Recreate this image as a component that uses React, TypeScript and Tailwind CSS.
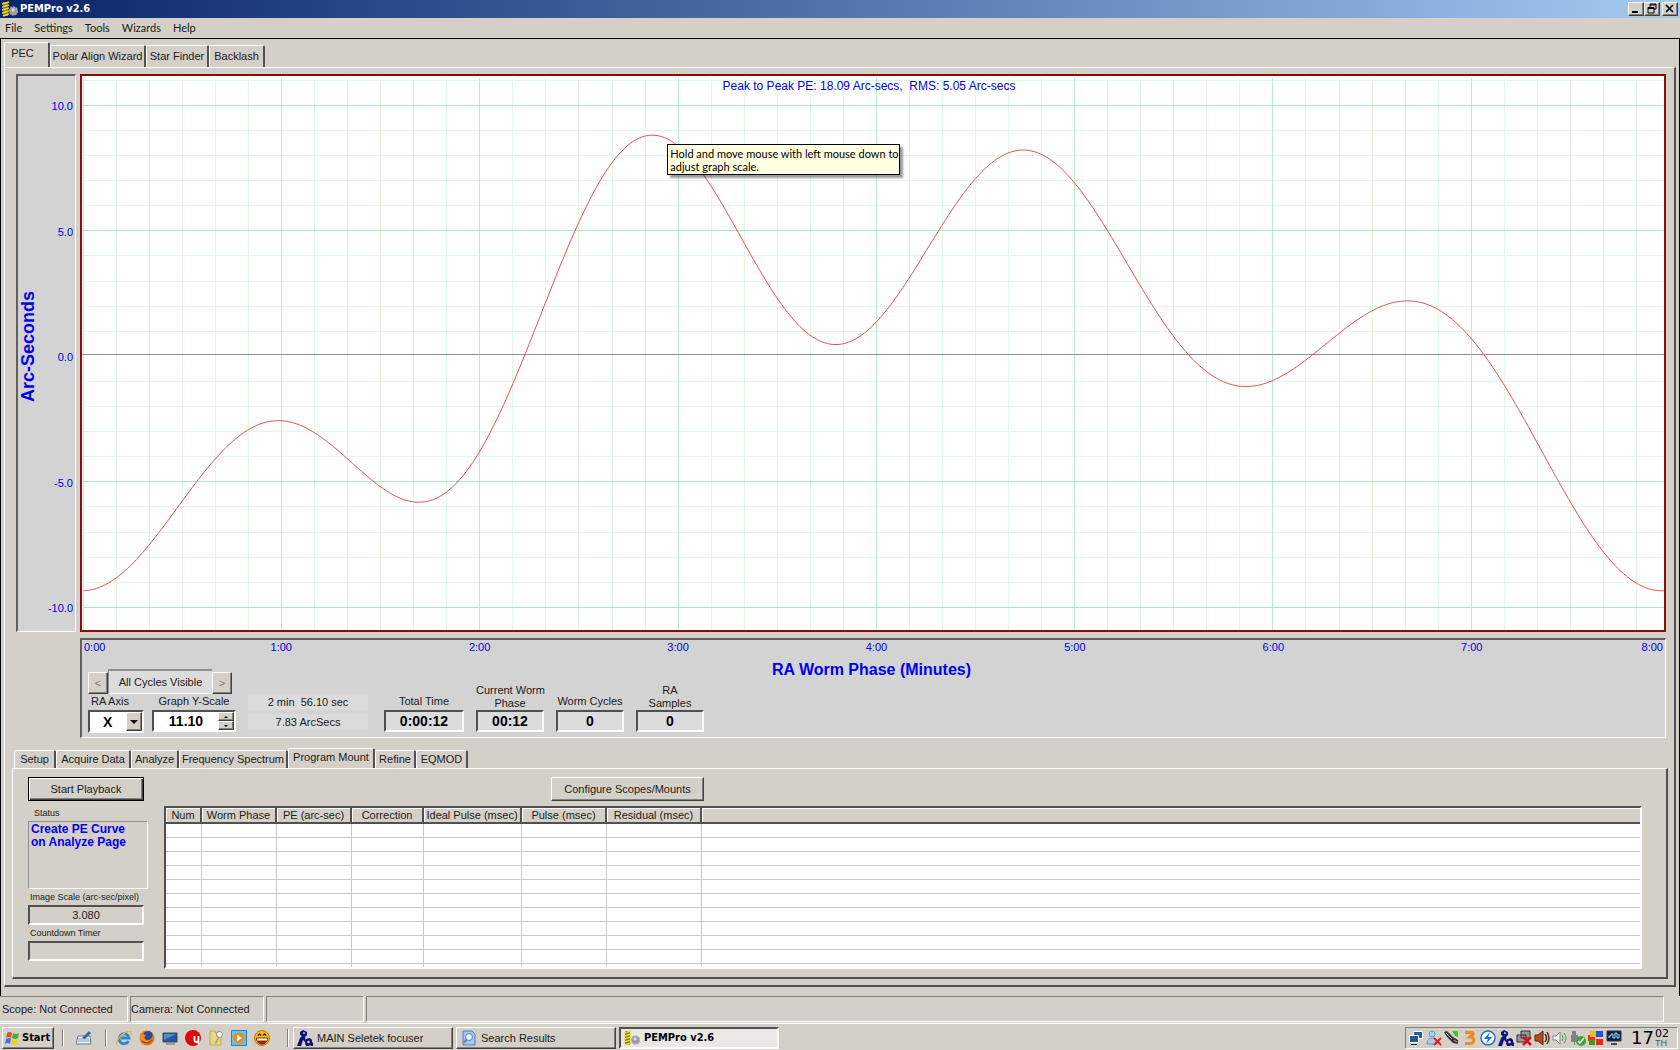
import { useState } from 'react';
import type { ReactNode } from 'react';

const sunken = 'border-2 border-t-[#505050] border-l-[#505050] border-r-white border-b-white';
const raised = 'border border-t-white border-l-white border-r-[#404040] border-b-[#404040] shadow-[inset_-1px_-1px_0_#808080]';

const mainTabs = [
  { label: 'PEC', width: 'w-[46px]' },
  { label: 'Polar Align Wizard', width: 'w-[96px]' },
  { label: 'Star Finder', width: 'w-[63px]' },
  { label: 'Backlash', width: 'w-[56px]' },
];

const pecTabs = [
  { label: 'Setup', width: 'w-[42px]' },
  { label: 'Acquire Data', width: 'w-[75px]' },
  { label: 'Analyze', width: 'w-[48px]' },
  { label: 'Frequency Spectrum', width: 'w-[109px]' },
  { label: 'Program Mount', width: 'w-[87px]' },
  { label: 'Refine', width: 'w-[41px]' },
  { label: 'EQMOD', width: 'w-[52px]' },
];

const columns = [
  { label: 'Num', width: 'w-[35px]' },
  { label: 'Worm Phase', width: 'w-[75px]' },
  { label: 'PE (arc-sec)', width: 'w-[75px]' },
  { label: 'Correction', width: 'w-[72px]' },
  { label: 'Ideal Pulse (msec)', width: 'w-[98px]' },
  { label: 'Pulse (msec)', width: 'w-[85px]' },
  { label: 'Residual (msec)', width: 'w-[95px]' },
];

const samples: [number, number][] = [
  [84.1, 590.3], [116.7, 577.7], [138.7, 557.7], [159, 532.7], [182, 500.7], [195.8, 482.3], [216.7, 457],
  [248.4, 430], [279, 421], [314.7, 432], [344.8, 457], [374.9, 482.3], [396.3, 497], [419.3, 501.7],
  [446.3, 492.7], [457.6, 482.3], [480.5, 450], [502.4, 406.3], [525.4, 354.7], [543.8, 306.3], [556, 276.7],
  [575.4, 230.3], [595.3, 188.3], [613.7, 160], [631, 142.7], [652.4, 136.5], [676, 144], [703.5, 175],
  [737.7, 230.3], [765.7, 281.3], [784, 309], [807, 332.3], [836, 344.3], [864.7, 333.3], [877, 322],
  [906.2, 281.3], [939.4, 230.3], [974.6, 180], [997.5, 157.3], [1023, 150], [1049.6, 159], [1075, 184],
  [1107.2, 230.3], [1137.9, 281.3], [1170, 331.7], [1188.4, 354.7], [1217, 378.7], [1245.5, 386.3],
  [1276.6, 379.3], [1312.3, 354.7], [1340.4, 331.7], [1375, 310], [1406.7, 301], [1441.4, 311],
  [1463.4, 329], [1483.3, 354.7], [1506.7, 390], [1531.7, 431.3], [1558.8, 482.3], [1582.8, 523.3],
  [1603.2, 551.7], [1630.2, 578.7], [1648, 588.3], [1663.9, 590.7],
];

const x0 = samples[0][0];
const period = samples[samples.length - 1][0] - x0;

function slope(i: number) {
  if (i === 0 || i === samples.length - 1) return 0;
  const [xa, ya] = samples[i - 1];
  const [xb, yb] = samples[i];
  const [xc, yc] = samples[i + 1];
  return (((yb - ya) / (xb - xa)) * (xc - xb) + ((yc - yb) / (xc - xb)) * (xb - xa)) / (xc - xa);
}

function interpolate(x: number) {
  let i = 1;
  while (i < samples.length - 1 && samples[i][0] < x) i++;
  const [xa, ya] = samples[i - 1];
  const [xb, yb] = samples[i];
  const h = xb - xa;
  const t = (x - xa) / h;
  return (
    ya * (1 + 2 * t) * (1 - t) ** 2 +
    slope(i - 1) * h * t * (1 - t) ** 2 +
    yb * t * t * (3 - 2 * t) +
    slope(i) * h * t * t * (t - 1)
  );
}

// the error of one worm turn is periodic, so only its first harmonics are drawn
function pePath(harmonics = 9, n = 512) {
  const ys = Array.from({ length: n }, (_, i) => interpolate(x0 + (i * period) / n));
  const terms = Array.from({ length: harmonics + 1 }, (_, k) => {
    let a = 0;
    let b = 0;
    ys.forEach((y, i) => {
      a += y * Math.cos((2 * Math.PI * k * i) / n);
      b += y * Math.sin((2 * Math.PI * k * i) / n);
    });
    return k === 0 ? [a / n, 0] : [(2 * a) / n, (2 * b) / n];
  });
  const pts = [];
  for (let i = 0; i <= n; i++) {
    const w = (2 * Math.PI * i) / n;
    const y = terms.reduce((sum, [a, b], k) => sum + a * Math.cos(k * w) + b * Math.sin(k * w), 0);
    pts.push(`${(x0 + (i * period) / n).toFixed(2)} ${y.toFixed(2)}`);
  }
  return 'M' + pts.join('L');
}

const curvePath = pePath();

function PeGraph() {
  const cols = Array.from({ length: 48 }, (_, i) => ({ x: Math.floor(83.3 + i * 33.045) + 0.5, major: i % 6 === 0 }));
  const rows = Array.from({ length: 22 }, (_, i) => ({ y: Math.floor(80.2 + i * 25.1) + 0.5, v: 11 - i }));
  return (
    <svg viewBox="82 76 1582 554" preserveAspectRatio="none" className="block w-full flex-1 min-h-0 h-0">
      <g shapeRendering="crispEdges" strokeWidth="1">
        {rows.map(r => r.v % 5 !== 0 && <line key={r.v} x1="83" x2="1664" y1={r.y} y2={r.y} stroke="#e0f9e6" />)}
        {cols.map(c => !c.major && <line key={c.x} y1="79" y2="630" x1={c.x} x2={c.x} stroke="#e0f9e6" />)}
        {cols.map(c => c.major && <line key={c.x} y1="78" y2="630" x1={c.x} x2={c.x} stroke="#bcecce" />)}
        {rows.map(r => r.v % 5 === 0 && r.v !== 0 && <line key={r.v} x1="83" x2="1664" y1={r.y} y2={r.y} stroke="#a8e6c6" />)}
        <line x1="82" x2="1664" y1="354.5" y2="354.5" stroke="#909090" />
      </g>
      <path d={curvePath} fill="none" stroke="#e85050" strokeWidth="1" />
    </svg>
  );
}

function AppIcon() {
  return (
    <svg viewBox="0 0 16 16" className="w-4 h-4 shrink-0">
      <path d="M1 1h5v14H1z" fill="#8a7a10" />
      <path d="M0 3l7-2M0 6l7-2M0 9l7-2M0 12l7-2M1 15l6-2" stroke="#f0dc30" strokeWidth="1.5" />
      <circle cx="11.500" cy="10" r="4" fill="#9a9aa2" />
      <circle cx="11.500" cy="10" r="4" fill="none" stroke="#a8a8b0" strokeWidth="1.500" strokeDasharray="2 1" />
      <circle cx="11" cy="9" r="1.500" fill="#e4e4ea" />
    </svg>
  );
}

function FocuserIcon() {
  return (
    <svg viewBox="0 0 16 16" className="w-4 h-4 shrink-0">
      <path d="M3 2l3-2 4 2v3l-2 2 1 5h-1l-2-2-2 6H0l3-8 2-2-2-1z" fill="#10107c" />
      <path d="M9 9l4-1 2 2v2l1 1v3h-2l-1-1-1 1H9l-1-3z" fill="#10107c" />
      <circle cx="7" cy="3" r="1" fill="#b8c0ff" />
      <circle cx="11.500" cy="12" r="1.300" fill="#d4d0c8" />
    </svg>
  );
}

function SearchIcon() {
  return (
    <svg viewBox="0 0 16 16" className="w-4 h-4 shrink-0">
      <path d="M2 1h9l3 3v11H2z" fill="#a8c4f0" stroke="#5a78b8" />
      <circle cx="8" cy="7" r="3.500" fill="#e8f4ff" stroke="#5880c0" />
      <path d="M5.500 9.500L3 12.500" stroke="#5880c0" strokeWidth="2" />
    </svg>
  );
}

type TabListProps = {
  tabs: { label: string; width: string }[];
  active: string;
  onChange: (label: string) => void;
  name: string;
  selectedClass: string;
  tabClass: string;
};

function TabList({ tabs, active, onChange, name, selectedClass, tabClass }: TabListProps) {
  return (
    <div role="tablist" aria-label={name} className="flex items-end">
      {tabs.map(t => (
        <button
          key={t.label}
          role="tab"
          aria-selected={t.label === active}
          onClick={() => onChange(t.label)}
          className={`${t.width} shrink-0 whitespace-nowrap rounded-t-xs border-t border-l border-r-2 border-t-white border-l-white border-r-[#505050] bg-[#d4d0c8] text-center ${
            t.label === active ? selectedClass : tabClass
          }`}
        >
          {t.label}
        </button>
      ))}
    </div>
  );
}

function Readout({ label, value, width }: { label: ReactNode; value: string; width: string }) {
  return (
    <div className={`${width} flex flex-col justify-end text-center`}>
      <div className="leading-[13px]">{label}</div>
      <output className={`${sunken} block h-[22px] bg-[#dcdcdc] font-bold text-sm leading-[18px] text-black`}>{value}</output>
    </div>
  );
}

function QuickLaunch() {
  return (
    <div className="flex items-center gap-[7px]">
      <button aria-label="Internet Explorer">
        <svg viewBox="0 0 16 16" className="w-4 h-4">
          <path d="M12.500 11a5 5 0 1 1 .5-3H5" fill="none" stroke="#2a86d8" strokeWidth="2.800" />
          <path d="M1 14.500C-1 10 9 0 15 1.500q1 1-.5 3" fill="none" stroke="#e8b830" strokeWidth="1.300" />
        </svg>
      </button>
      <button aria-label="Firefox">
        <svg viewBox="0 0 16 16" className="w-4 h-4">
          <circle cx="8" cy="8" r="7.500" fill="#e07818" />
          <circle cx="9" cy="5.500" r="4.500" fill="#304a98" />
          <path d="M1 3c2 1 3 2 6 2l-2 3c2 4 6 3 8 0 0 5-4 6-7 5S0 8 1 3z" fill="#f0921c" />
          <path d="M3 11q5 4 10-1" fill="none" stroke="#b83c10" strokeWidth="1.200" />
        </svg>
      </button>
      <button aria-label="Show Desktop">
        <svg viewBox="0 0 16 16" className="w-4 h-4">
          <path d="M1 3h14v9H1z" fill="#2454a4" stroke="#484848" />
          <path d="M2 4h12L2 10z" fill="#4c8cd8" />
          <path d="M4 14h9" stroke="#606060" />
        </svg>
      </button>
      <button aria-label="Mu">
        <svg viewBox="0 0 16 16" className="w-4 h-4">
          <circle cx="8" cy="8" r="8" fill="#e00808" />
          <path d="M9.500 6v4q0 2 2 2t2-2V6M13.500 10v4" fill="none" stroke="#fff" strokeWidth="1.800" />
        </svg>
      </button>
      <button aria-label="Keys">
        <svg viewBox="0 0 16 16" className="w-4 h-4">
          <path d="M2 1h5l1 2h5v12H2z" fill="#e8d878" stroke="#c0a850" />
          <circle cx="11.500" cy="4.500" r="3" fill="#f4f4e4" stroke="#888" />
          <path d="M10.500 7.500l-3 6" stroke="#999" strokeWidth="1.500" />
        </svg>
      </button>
      <button aria-label="Media Player">
        <svg viewBox="0 0 16 16" className="w-4 h-4">
          <path d="M.5.5h15v15H.5z" fill="#68c0f0" stroke="#2080c8" />
          <circle cx="8" cy="8" r="5.500" fill="#f08820" />
          <path d="M6 4.500l5 3.500-5 3.500z" fill="#fff" />
        </svg>
      </button>
      <button aria-label="Messenger">
        <svg viewBox="0 0 16 16" className="w-4 h-4">
          <circle cx="8" cy="8" r="7.500" fill="#f8b818" stroke="#b87808" />
          <path d="M2.500 8h11c0 8-11 8-11 0z" fill="#a02808" stroke="#703000" />
          <path d="M3 8.500h10v2H3z" fill="#fff" />
          <path d="M4 5.500l1.500-1.500L7 5.500M9 5.500L10.500 4 12 5.500" fill="none" stroke="#402000" strokeWidth="1.300" />
        </svg>
      </button>
    </div>
  );
}

function Tray() {
  return (
    <div className="flex items-center gap-[2px]">
      <svg viewBox="0 0 16 16" className="w-4 h-4">
        <path d="M5.500 1.500h9v7h-9z" fill="#1c60a8" stroke="#fff" />
        <path d="M1.500 5.500h9v7h-9z" fill="#1c5c98" stroke="#fff" />
        <path d="M3 14.500h6" stroke="#222" />
      </svg>
      <svg viewBox="0 0 16 16" className="w-4 h-4">
        <circle cx="6" cy="4" r="3" fill="#a8d0ec" stroke="#6098c0" />
        <path d="M1 14c0-8 10-8 10 0z" fill="#a8d0ec" stroke="#6098c0" />
        <path d="M8 8l7 7M15 8l-7 7" stroke="#e02020" strokeWidth="2" />
      </svg>
      <svg viewBox="0 0 16 16" className="w-4 h-4">
        <path d="M0 2l3-1 6 6 5 3v4l-5-1-6-6z" fill="#383838" />
        <path d="M8 1h6v6l-3-1z" fill="#48c828" />
        <path d="M2 3l6 6M10 10l3 2" stroke="#b0b0b0" />
      </svg>
      <svg viewBox="0 0 16 16" className="w-4 h-4">
        <path d="M3 2.500h7q2 0 1 2L8 7c5 0 5 6.500 0 6.500H3" fill="none" stroke="#f08828" strokeWidth="3" />
      </svg>
      <svg viewBox="0 0 16 16" className="w-4 h-4">
        <circle cx="8" cy="8" r="7" fill="#f0f8ff" stroke="#2874c8" strokeWidth="1.500" />
        <path d="M10 2L4 9h4l-2 5 6-7H8z" fill="#1868d0" />
      </svg>
      <FocuserIcon />
      <svg viewBox="0 0 16 16" className="w-4 h-4">
        <path d="M5 1h9v7H5zM1 5h9v7H1z" fill="#989898" stroke="#333" />
        <path d="M7 7l8 8M15 7l-8 8" stroke="#e01010" strokeWidth="2.500" />
      </svg>
      <svg viewBox="0 0 16 16" className="w-4 h-4">
        <path d="M1 5h3l5-4v14l-5-4H1z" fill="#b04c1c" stroke="#602008" />
        <path d="M11 4q3 4 0 8M13 2q4 6 0 12" fill="none" stroke="#401808" strokeWidth="1.300" />
      </svg>
      <svg viewBox="0 0 16 16" className="w-4 h-4">
        <path d="M1 6h3l4-4v12l-4-4H1z" fill="#f4f4f4" stroke="#888" />
        <path d="M10 5q2 3 0 6M12 3q4 5 0 10" fill="none" stroke="#48a048" />
      </svg>
      <svg viewBox="0 0 16 16" className="w-4 h-4">
        <path d="M2 1h4v4H2zM1 5h7v7H1zM4 12h1v3H4z" fill="#808080" />
        <circle cx="11" cy="11" r="5" fill="#38a838" />
        <path d="M8 11l2 2 4-5" fill="none" stroke="#fff" strokeWidth="1.500" />
      </svg>
      <svg viewBox="0 0 16 16" className="w-4 h-4">
        <path d="M0 5h7v6H0z" fill="#e83818" />
        <path d="M8 1h7v6H8z" fill="#2858c8" />
        <path d="M1 10h6v5H1z" fill="#38a020" />
        <path d="M8 9h7v6H8z" fill="#e82818" />
        <path d="M2 1h6v6H2z" fill="#f0c020" />
      </svg>
      <svg viewBox="0 0 16 16" className="w-4 h-4">
        <path d="M1 1h14v10H1z" fill="#082048" stroke="#383838" />
        <path d="M3 8V6h2V4h2v4h2V3h2v5h2V4" fill="none" stroke="#a8d8f8" />
        <path d="M5 14h6" stroke="#484848" strokeWidth="2" />
      </svg>
    </div>
  );
}

export default function App() {
  const [page, setPage] = useState('PEC');
  const [tab, setTab] = useState('Program Mount');
  const [scale, setScale] = useState(11.1);
  const [axis, setAxis] = useState('X');

  return (
    <div className="min-h-screen flex flex-col bg-[#d4d0c8] font-['Liberation_Sans',sans-serif] text-[11px] text-[#202020]">
      <header className="h-[18px] shrink-0 flex items-center bg-linear-to-r from-[#0a246a] to-[#a6caf0] pl-[2px] pr-[2px] font-['DejaVu_Sans_Condensed',sans-serif]">
        <AppIcon />
        <h1 className="ml-[2px] flex-1 text-[11px] font-bold text-white">PEMPro v2.6</h1>
        <button aria-label="Minimize" className={`${raised} w-4 h-[14px] bg-[#d4d0c8]`}>
          <svg viewBox="0 0 14 12" className="w-full h-full"><path d="M3 9h6" stroke="#000" strokeWidth="2" /></svg>
        </button>
        <button aria-label="Restore" className={`${raised} w-4 h-[14px] bg-[#d4d0c8]`}>
          <svg viewBox="0 0 14 12" className="w-full h-full"><path d="M5 4V1h6v5H9M5 2h6M3 4.500h6V10H3zM3 5.500h6" fill="none" stroke="#000" /></svg>
        </button>
        <button aria-label="Close" className={`${raised} ml-[2px] w-4 h-[14px] bg-[#d4d0c8]`}>
          <svg viewBox="0 0 14 12" className="w-full h-full"><path d="M3 2l7 7M10 2l-7 7" stroke="#000" strokeWidth="1.700" /></svg>
        </button>
      </header>

      <nav className="h-5 shrink-0 flex items-center gap-3 pl-[5px] pt-[1px] font-[Lato,sans-serif]">
        {['File', 'Settings', 'Tools', 'Wizards', 'Help'].map(m => (
          <button key={m}>{m}</button>
        ))}
      </nav>

      <main className="flex-1 flex flex-col border-t border-l border-r border-black pl-[3px] pr-[3px] pt-[3px] pb-[9px]">
        <TabList
          name="Pages"
          tabs={mainTabs}
          active={page}
          onChange={setPage}
          selectedClass="h-[25px] pr-2 pb-[3px]"
          tabClass="h-[22px]"
        />
        <section className="flex-1 flex flex-col border-t border-l border-t-white border-l-white border-r-2 border-b-2 border-r-[#505050] border-b-[#505050] pt-[6px] pb-[6px] pl-[7px] pr-[6px]">
          <div className="flex-1 flex gap-1 pl-1 pr-[2px]">
            <div className="w-[60px] shrink-0 flex border-t-2 border-l-2 border-t-[#606060] border-l-[#606060] border-b border-r border-b-white border-r-white bg-[#d3d3d3] text-[#0000e0]">
              <div className="flex-1 flex items-center pb-[14px]">
                <h2 className="[writing-mode:vertical-rl] rotate-180 text-lg leading-5 font-bold text-[#0000f0]">Arc-Seconds</h2>
              </div>
              <div className="flex flex-col justify-between pt-[22px] pb-[15px] pr-[2px] text-right leading-4">
                <span>10.0</span>
                <span>5.0</span>
                <span>0.0</span>
                <span>-5.0</span>
                <span>-10.0</span>
              </div>
            </div>
            <div className="relative flex-1 flex flex-col border-2 border-[#8c0c0c] bg-white">
              <PeGraph />
              <p className="absolute inset-x-0 top-[2px] pr-2 text-center text-xs leading-4 text-[#0000e0] whitespace-pre">
                Peak to Peak PE: 18.09 Arc-secs,  RMS: 5.05 Arc-secs
              </p>
              <div
                role="tooltip"
                className="absolute left-[37%] top-[68px] w-[233px] border border-black bg-[#ffffe1] px-[2px] pt-[2px] pb-[1px] leading-[13px] text-black whitespace-nowrap shadow-[3px_3px_2px_rgba(0,0,0,0.4)] font-[Lato,sans-serif]"
              >
                Hold and move mouse with left mouse down to
                <br />
                adjust graph scale.
              </div>
            </div>
          </div>

          <div className="ml-[68px] mr-[2px] mt-[6px] h-[100px] shrink-0 border-t-2 border-l-2 border-t-[#606060] border-l-[#606060] border-b border-r border-b-white border-r-white bg-[#d3d3d3]">
            <div className="flex leading-[14px] text-[#0000e0]">
              <span className="w-[100px] pl-[2px]">0:00</span>
              {[1, 2, 3, 4, 5, 6, 7].map(n => (
                <span key={n} className="flex-1 text-center">{n}:00</span>
              ))}
              <span className="w-[94px] pr-[2px] text-right">8:00</span>
            </div>
            <h2 className="h-[15px] pt-[6px] pr-1 text-center text-base leading-5 font-bold text-[#0000f0]">RA Worm Phase (Minutes)</h2>
            <div className="flex pl-[6px]">
              <div className="w-[148px]">
                <div className="flex items-end">
                  <button aria-label="Previous cycle" className={`${raised} w-5 h-[22px] bg-[#d4d0c8] text-[#808080]`}>&lt;</button>
                  <div className="h-[25px] w-[104px] border-t-2 border-l border-b border-t-[#909090] border-l-[#909090] border-b-white bg-[#dcdcdc] text-center leading-[22px]">All Cycles Visible</div>
                  <button aria-label="Next cycle" className={`${raised} w-5 h-[22px] bg-[#d4d0c8] text-[#808080]`}>&gt;</button>
                </div>
                <div className="flex gap-2">
                  <div className="w-14">
                    <label htmlFor="axis" className="block pl-[3px] leading-[14px] pb-[2px]">RA Axis</label>
                    <div className={`${sunken} relative h-[23px] bg-white`}>
                      <select
                        id="axis"
                        value={axis}
                        onChange={e => setAxis(e.target.value)}
                        className="block w-full h-full appearance-none bg-white pl-[13px] text-sm leading-4 font-bold text-black"
                      >
                        <option>X</option>
                        <option>Y</option>
                      </select>
                      <span className={`${raised} pointer-events-none absolute right-0 inset-y-0 flex w-4 items-center justify-center bg-[#d4d0c8]`}>
                        <svg viewBox="0 0 8 4" className="w-2 h-1"><path d="M0 0h8L4 4z" /></svg>
                      </span>
                    </div>
                  </div>
                  <div className="w-[84px]">
                    <label htmlFor="scale" className="block text-center leading-[14px] pb-[2px] whitespace-nowrap">Graph Y-Scale</label>
                    <div className={`${sunken} flex h-[22px] bg-white`}>
                      <input
                        id="scale"
                        value={scale.toFixed(2)}
                        onChange={e => setScale(Number(e.target.value) || 0)}
                        className="w-0 flex-1 text-center text-sm font-bold text-black outline-none"
                      />
                      <div className="flex w-4 flex-col">
                        <button aria-label="Increase scale" onClick={() => setScale(scale + 0.1)} className={`${raised} flex flex-1 items-center justify-center bg-[#d4d0c8]`}>
                          <svg viewBox="0 0 4 2" className="w-1 h-[2px]"><path d="M0 2h4L2 0z" /></svg>
                        </button>
                        <button aria-label="Decrease scale" onClick={() => setScale(scale - 0.1)} className={`${raised} flex flex-1 items-center justify-center bg-[#d4d0c8]`}>
                          <svg viewBox="0 0 4 2" className="w-1 h-[2px]"><path d="M0 0h4L2 2z" /></svg>
                        </button>
                      </div>
                    </div>
                  </div>
                </div>
              </div>
              <div className="ml-3 w-[120px] pt-[25px] text-center leading-4 whitespace-pre">
                <div className="mb-1 bg-[#dbdbdb]">2 min  56.10 sec</div>
                <div className="bg-[#dbdbdb]">7.83 ArcSecs</div>
              </div>
              <div className="ml-4 flex gap-3 h-[63px]">
                <Readout label={<span className="block pb-[2px]">Total Time</span>} value="0:00:12" width="w-20" />
                <Readout label={<>Current Worm<br />Phase</>} value="00:12" width="w-[68px] whitespace-nowrap" />
                <Readout label={<span className="block pb-[2px]">Worm Cycles</span>} value="0" width="w-[68px]" />
                <Readout label={<>RA<br />Samples</>} value="0" width="w-[68px]" />
              </div>
            </div>
          </div>

          <div className="mt-[10px] pl-[2px]">
            <TabList
              name="PEC steps"
              tabs={pecTabs}
              active={tab}
              onChange={setTab}
              selectedClass="h-5 pb-[3px]"
              tabClass="h-[18px]"
            />
          </div>
          <section className="h-[211px] shrink-0 flex border-t border-l border-t-white border-l-white border-r-2 border-b-2 border-r-[#505050] border-b-[#505050] pl-[15px] pt-2">
            <div className="w-[120px] shrink-0">
              <button className="block h-6 w-[116px] border border-black bg-[#d4d0c8] shadow-[inset_1px_1px_0_#fff,inset_-1px_-1px_0_#404040,inset_-2px_-2px_0_#808080]">
                Start Playback
              </button>
              <h3 className="mt-1 pl-[6px] text-[9px] leading-4">Status</h3>
              <div className="h-[68px] border border-t-[#909090] border-l-[#909090] border-r-white border-b-white pl-[2px] pt-[1px] text-xs leading-[13px] font-bold text-[#0000f0] whitespace-nowrap">
                Create PE Curve
                <br />
                on Analyze Page
              </div>
              <label htmlFor="img-scale" className="block pl-[2px] text-[9px] leading-4 whitespace-nowrap">Image Scale (arc-sec/pixel)</label>
              <input id="img-scale" readOnly value="3.080" className={`${sunken} block h-5 w-[116px] bg-[#d4d0c8] text-center outline-none`} />
              <label htmlFor="countdown" className="block pl-[2px] text-[9px] leading-4">Countdown Timer</label>
              <input id="countdown" readOnly value="" className={`${sunken} block h-5 w-[116px] bg-[#d4d0c8] outline-none`} />
            </div>
            <div className="ml-4 mr-6 flex-1">
              <button className={`${raised} ml-[387px] block h-6 w-[153px] bg-[#d4d0c8]`}>Configure Scopes/Mounts</button>
              <div className={`${sunken} mt-[5px] h-[163px] overflow-hidden bg-white`}>
                <table className="w-full table-fixed border-collapse">
                  <thead>
                    <tr className="h-[15px] bg-[#d4d0c8]">
                      {columns.map(c => (
                        <th key={c.label} scope="col" className={`${c.width} border-r-2 border-b-2 border-[#505050] p-0 text-center font-normal leading-[14px] whitespace-nowrap shadow-[inset_1px_1px_0_#fff]`}>
                          {c.label}
                        </th>
                      ))}
                      <th aria-label="Spare" className="border-b-2 border-[#505050] p-0 shadow-[inset_1px_1px_0_#fff]" />
                    </tr>
                  </thead>
                  <tbody>
                    {Array.from({ length: 11 }, (_, r) => (
                      <tr key={r} className="h-[14px] border-b border-[#c8c8c4]">
                        {columns.map(c => (
                          <td key={c.label} className="border-r border-[#c8c8c4] p-0" />
                        ))}
                        <td className="p-0" />
                      </tr>
                    ))}
                  </tbody>
                </table>
              </div>
            </div>
          </section>
        </section>
      </main>

      <footer className="shrink-0">
        <div className="flex h-[26px] gap-[2px] pr-4 leading-6">
          <div className="w-32 border border-l-0 border-t-[#808080] border-r-white border-b-white pl-[2px]">Scope: Not Connected</div>
          <div className="w-[134px] border border-t-[#808080] border-l-[#808080] border-r-white border-b-white">Camera: Not Connected</div>
          <div className="w-[98px] border border-t-[#808080] border-l-[#808080] border-r-white border-b-white" />
          <div className="flex-1 border border-t-[#808080] border-l-[#808080] border-r-white border-b-white" />
        </div>
        <div className="mt-[1px] flex h-[29px] items-center border-t border-white px-[2px]">
          <button className={`${raised} flex h-[22px] w-[52px] items-center gap-[2px] pl-[1px] text-[11px] font-bold text-black font-['DejaVu_Sans_Condensed',sans-serif]`}>
            <svg viewBox="0 0 16 16" className="w-4 h-4 shrink-0">
              <path d="M3 3q2-2 5 0L7 8Q4 6 2 8z" fill="#e85028" />
              <path d="M9 3q3 2 6 0l-1 5q-3 2-6 0z" fill="#48b028" />
              <path d="M2 9q3-2 5 0l-1 5q-3-2-5 0z" fill="#3878e0" />
              <path d="M8 9q3 2 6 0l-1 5q-3 2-6 0z" fill="#f8c820" />
            </svg>
            Start
          </button>
          <div className="ml-2 h-[18px] w-[2px] border-l border-r border-l-[#808080] border-r-white" />
          <button aria-label="Tablet" className="ml-3">
            <svg viewBox="0 0 16 16" className="w-4 h-4">
              <path d="M2 6h12l1 8H0z" fill="#e8f0f8" stroke="#607890" />
              <path d="M2 9h11M2 11h12" stroke="#88a0b8" />
              <path d="M6 8l7-7 2 2-6 6z" fill="#2868b0" />
            </svg>
          </button>
          <div className="ml-[13px] mr-[9px] h-[18px] w-[2px] border-l border-r border-l-[#808080] border-r-white" />
          <QuickLaunch />
          <div className="ml-[17px] mr-1 h-[18px] w-[2px] border-l border-r border-l-[#808080] border-r-white" />
          <div className="flex gap-[3px]">
            <button className={`${raised} flex h-[22px] w-40 items-center gap-1 pl-[3px]`}><FocuserIcon />MAIN Seletek focuser</button>
            <button className={`${raised} flex h-[22px] w-40 items-center gap-1 pl-1`}><SearchIcon />Search Results</button>
            <button className={`${sunken} flex h-[22px] w-40 items-center gap-1 bg-[#eae8e4] pl-[3px] font-bold text-black font-['DejaVu_Sans_Condensed',sans-serif]`}><AppIcon />PEMPro v2.6</button>
          </div>
          <div className="ml-auto flex h-[22px] items-center border border-t-[#808080] border-l-[#808080] border-r-white border-b-white pl-[2px] pr-2 text-black">
            <Tray />
            <time className="ml-[9px] flex items-center font-['DejaVu_Sans',sans-serif]">
              <span className="text-lg leading-5">17</span>
              <span className="flex flex-col pl-[1px]">
                <span className="text-[11px] leading-[11px]">02</span>
                <span className="text-[9px] leading-[9px] text-[#206878] font-['Liberation_Sans',sans-serif]">TH</span>
              </span>
            </time>
          </div>
        </div>
      </footer>
    </div>
  );
}
